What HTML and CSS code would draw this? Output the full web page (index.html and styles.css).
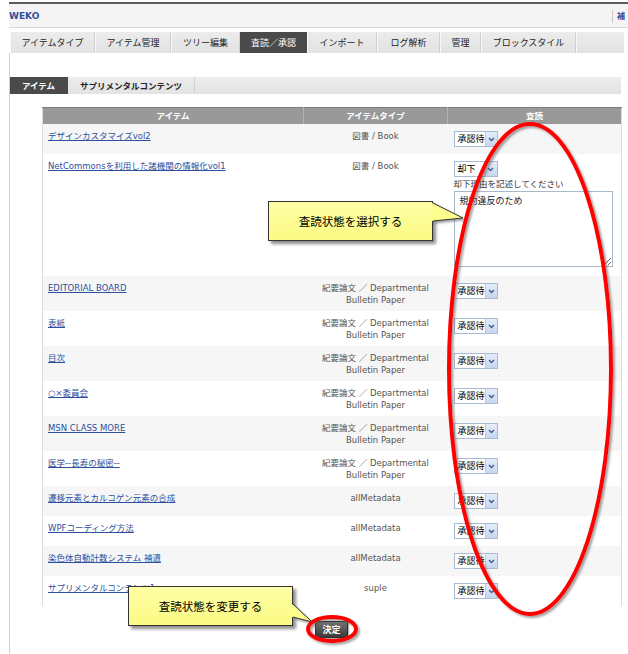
FILE: index.html
```html
<!DOCTYPE html>
<html lang="ja">
<head>
<meta charset="utf-8">
<title>WEKO 査読／承認</title>
<link rel="stylesheet" href="styles.css">
</head>
<body>
<div class="page">
  <header class="topbar">
    <span class="logo">WEKO</span>
    <span class="topright">補</span>
  </header>
  <nav class="tabs">
    <span class="tab t1">アイテムタイプ</span>
    <span class="tab t2">アイテム管理</span>
    <span class="tab t3">ツリー編集</span>
    <span class="tab t4 active">査読／承認</span>
    <span class="tab t5">インポート</span>
    <span class="tab t6">ログ解析</span>
    <span class="tab t7">管理</span>
    <span class="tab t8">ブロックスタイル</span>
    <span class="tab fill"></span>
  </nav>
  <main class="content">
    <div class="subtabs">
      <span class="subtab active">アイテム</span>
      <span class="subtab">サプリメンタルコンテンツ</span>
      <span class="subtab fill"></span>
    </div>
    <table class="grid">
      <colgroup><col class="c1"><col class="c2"><col class="c3"></colgroup>
      <thead>
        <tr><th>アイテム</th><th>アイテムタイプ</th><th>査読</th></tr>
      </thead>
      <tbody>
        <tr>
          <td><a href="#">デザインカスタマイズvol2</a></td>
          <td class="type">図書 / Book</td>
          <td><span class="sel"><span class="sel-v">承認待</span><span class="sel-a"><svg width="7" height="5" viewBox="0 0 7 5"><path d="M1 1l2.5 2.5L6 1" fill="none" stroke="#3d5a8f" stroke-width="1.3"/></svg></span></span></td>
        </tr>
        <tr class="reject">
          <td><a href="#">NetCommonsを利用した諸機関の情報化vol1</a></td>
          <td class="type">図書 / Book</td>
          <td>
            <span class="sel"><span class="sel-v">却下</span><span class="sel-a"><svg width="7" height="5" viewBox="0 0 7 5"><path d="M1 1l2.5 2.5L6 1" fill="none" stroke="#3d5a8f" stroke-width="1.3"/></svg></span></span>
            <div class="reason-label">却下理由を記述してください</div>
            <textarea class="reason" readonly>規約違反のため</textarea>
          </td>
        </tr>
        <tr>
          <td><a href="#">EDITORIAL BOARD</a></td>
          <td class="type">紀要論文 ／ Departmental<br>Bulletin Paper</td>
          <td><span class="sel"><span class="sel-v">承認待</span><span class="sel-a"><svg width="7" height="5" viewBox="0 0 7 5"><path d="M1 1l2.5 2.5L6 1" fill="none" stroke="#3d5a8f" stroke-width="1.3"/></svg></span></span></td>
        </tr>
        <tr>
          <td><a href="#">表紙</a></td>
          <td class="type">紀要論文 ／ Departmental<br>Bulletin Paper</td>
          <td><span class="sel"><span class="sel-v">承認待</span><span class="sel-a"><svg width="7" height="5" viewBox="0 0 7 5"><path d="M1 1l2.5 2.5L6 1" fill="none" stroke="#3d5a8f" stroke-width="1.3"/></svg></span></span></td>
        </tr>
        <tr>
          <td><a href="#">目次</a></td>
          <td class="type">紀要論文 ／ Departmental<br>Bulletin Paper</td>
          <td><span class="sel"><span class="sel-v">承認待</span><span class="sel-a"><svg width="7" height="5" viewBox="0 0 7 5"><path d="M1 1l2.5 2.5L6 1" fill="none" stroke="#3d5a8f" stroke-width="1.3"/></svg></span></span></td>
        </tr>
        <tr>
          <td><a href="#">○×委員会</a></td>
          <td class="type">紀要論文 ／ Departmental<br>Bulletin Paper</td>
          <td><span class="sel"><span class="sel-v">承認待</span><span class="sel-a"><svg width="7" height="5" viewBox="0 0 7 5"><path d="M1 1l2.5 2.5L6 1" fill="none" stroke="#3d5a8f" stroke-width="1.3"/></svg></span></span></td>
        </tr>
        <tr>
          <td><a href="#">MSN CLASS MORE</a></td>
          <td class="type">紀要論文 ／ Departmental<br>Bulletin Paper</td>
          <td><span class="sel"><span class="sel-v">承認待</span><span class="sel-a"><svg width="7" height="5" viewBox="0 0 7 5"><path d="M1 1l2.5 2.5L6 1" fill="none" stroke="#3d5a8f" stroke-width="1.3"/></svg></span></span></td>
        </tr>
        <tr>
          <td><a href="#">医学--長寿の秘密--</a></td>
          <td class="type">紀要論文 ／ Departmental<br>Bulletin Paper</td>
          <td><span class="sel"><span class="sel-v">承認待</span><span class="sel-a"><svg width="7" height="5" viewBox="0 0 7 5"><path d="M1 1l2.5 2.5L6 1" fill="none" stroke="#3d5a8f" stroke-width="1.3"/></svg></span></span></td>
        </tr>
        <tr>
          <td><a href="#">遷移元素とカルコゲン元素の合成</a></td>
          <td class="type">allMetadata</td>
          <td><span class="sel"><span class="sel-v">承認待</span><span class="sel-a"><svg width="7" height="5" viewBox="0 0 7 5"><path d="M1 1l2.5 2.5L6 1" fill="none" stroke="#3d5a8f" stroke-width="1.3"/></svg></span></span></td>
        </tr>
        <tr>
          <td><a href="#">WPFコーディング方法</a></td>
          <td class="type">allMetadata</td>
          <td><span class="sel"><span class="sel-v">承認待</span><span class="sel-a"><svg width="7" height="5" viewBox="0 0 7 5"><path d="M1 1l2.5 2.5L6 1" fill="none" stroke="#3d5a8f" stroke-width="1.3"/></svg></span></span></td>
        </tr>
        <tr>
          <td><a href="#">染色体自動計数システム 補遺</a></td>
          <td class="type">allMetadata</td>
          <td><span class="sel"><span class="sel-v">承認待</span><span class="sel-a"><svg width="7" height="5" viewBox="0 0 7 5"><path d="M1 1l2.5 2.5L6 1" fill="none" stroke="#3d5a8f" stroke-width="1.3"/></svg></span></span></td>
        </tr>
        <tr class="last">
          <td><a href="#">サプリメンタルコンテンツ1</a></td>
          <td class="type">suple</td>
          <td><span class="sel"><span class="sel-v">承認待</span><span class="sel-a"><svg width="7" height="5" viewBox="0 0 7 5"><path d="M1 1l2.5 2.5L6 1" fill="none" stroke="#3d5a8f" stroke-width="1.3"/></svg></span></span></td>
        </tr>
      </tbody>
    </table>
    <div class="actions"><button class="btn" type="button">決定</button></div>
  </main>
</div>

<div class="callout callout-select">査読状態を選択する</div>
<div class="callout callout-submit">査読状態を変更する</div>

<svg class="marks" width="628" height="654" viewBox="0 0 628 654">
  <defs>
    <filter id="sh" x="-20%" y="-20%" width="140%" height="140%">
      <feDropShadow dx="2" dy="2" stdDeviation="1.2" flood-color="#555" flood-opacity="0.55"/>
    </filter>
  </defs>
  <g filter="url(#sh)">
    <polygon points="432,203 463,218 432,221" fill="#fdfd8e"/>
    <polyline points="433,203 463,218 433,221" fill="none" stroke="#333" stroke-width="1"/>
    <polygon points="292,604 312,622 292,617" fill="#fdfd8e"/>
    <polyline points="293,604 312,622 293,617" fill="none" stroke="#333" stroke-width="1"/>
  </g>
  <g filter="url(#sh)" fill="none" stroke="#ff0000" stroke-width="4">
    <ellipse cx="530" cy="369" rx="81" ry="245"/>
    <ellipse cx="332" cy="629" rx="24" ry="12"/>
  </g>
</svg>
</body>
</html>
```
FILE: styles.css
```css
html, body {
  margin: 0;
  padding: 0;
  background: #fff;
}
body {
  position: relative;
  width: 628px;
  height: 654px;
  overflow: hidden;
  font-family: "DejaVu Sans", "Noto Sans CJK JP", sans-serif;
  font-size: 8.5px;
  line-height: 12px;
  color: #333;
}
.page {
  margin-left: 9px;
  width: 640px;
  padding-top: 2px;
}

/* header */
.topbar {
  display: flex;
  align-items: center;
  height: 23px;
  border-top: 2px solid #5c5c5c;
  border-bottom: 1px solid #d9d9d9;
  background: #f4f4f4;
}
.logo {
  color: #2f4f9f;
  font-weight: bold;
  font-size: 9px;
}
.topright {
  margin-left: 603px;
  height: 13px;
  border-left: 1px solid #c9c9c9;
  padding-left: 4px;
  color: #2f4f9f;
  font-family: "Noto Sans CJK JP", sans-serif;
  font-weight: bold;
  font-size: 8px;
  white-space: nowrap;
  position: absolute;
  left: 9px;
  top: 10px;
}

/* main tabs */
.tabs {
  display: flex;
  margin: 4px 0 0 1px;
  width: 614px;
  height: 21px;
}
.tab {
  box-sizing: border-box;
  display: flex;
  align-items: center;
  justify-content: center;
  height: 21px;
  background: linear-gradient(#ececec, #e2e2e2);
  border-right: 1px solid #d0d0d0;
  border-left: 1px solid #f8f8f8;
  color: #222;
  font-size: 9px;
  white-space: nowrap;
}
.tab.active {
  background: #4a4a4a;
  color: #fff;
  border-color: #4a4a4a;
}
.t1 { width: 85px; }
.t2 { width: 76px; }
.t3 { width: 69px; }
.t4 { width: 67px; }
.t5 { width: 70px; }
.t6 { width: 63px; }
.t7 { width: 41px; }
.t8 { width: 95px; }
.tab.fill { flex: 1; border-right: 0; }

/* content */
.content {
  border-left: 1px solid #cfcfcf;
  padding: 24px 0 8px 0;
  width: 620px;
}
.subtabs {
  display: flex;
  width: 611px;
  height: 17px;
  margin-bottom: 13px;
}
.subtab {
  box-sizing: border-box;
  display: flex;
  align-items: center;
  justify-content: center;
  height: 17px;
  background: linear-gradient(#ececec, #e3e3e3);
  border-right: 1px solid #cfcfcf;
  color: #222;
  font-weight: bold;
  white-space: nowrap;
  width: 127px;
}
.subtab.active {
  width: 58px;
  background: #4a4a4a;
  color: #fff;
  border-color: #4a4a4a;
}
.subtab.fill { flex: 1; border-right: 0; }

/* table */
.grid {
  margin-left: 32px;
  width: 579px;
  table-layout: fixed;
  border-collapse: collapse;
  border-left: 1px solid #dcdcdc;
  border-right: 1px solid #dcdcdc;
}
.c1 { width: 261px; }
.c2 { width: 144px; }
.c3 { width: 174px; }
.grid th {
  height: 16px;
  padding: 0;
  background: #999;
  border-top: 1px solid #7d7d7d;
  border-right: 1px solid #b3b3b3;
  color: #fff;
  font-weight: bold;
  text-align: center;
  line-height: 15px;
}
.grid th:last-child { border-right: 0; }
.grid td {
  vertical-align: top;
  padding: 6px 5px 5px 5px;
}
.grid tbody tr:nth-child(odd) td { background: #f6f6f6; }
.grid tbody tr:nth-child(even) td { background: #fff; }
.grid a {
  color: #2c4f9e;
  text-decoration: underline;
}
.grid td.type {
  text-align: center;
  color: #555;
}
.grid td:last-child { padding-left: 6px; }

.sel {
  box-sizing: border-box;
  display: inline-flex;
  width: 44px;
  height: 16px;
  margin: 1px 0 2px 0;
  border: 1px solid #a8bad4;
  background: #fff;
  vertical-align: top;
  font-size: 9px;
}
.reject .sel { margin-bottom: 1px; }
.sel-v {
  flex: 1;
  padding-left: 3px;
  color: #000;
  line-height: 14px;
  white-space: nowrap;
}
.sel-a {
  width: 12px;
  display: flex;
  align-items: center;
  justify-content: center;
  background: linear-gradient(#e6edf9, #c6d6f0);
  border-left: 1px solid #bccbe3;
}
.reason-label {
  margin-top: 0;
  color: #333;
  line-height: 12px;
}
.reason {
  display: block;
  box-sizing: border-box;
  width: 159px;
  height: 76px;
  margin: 1px 0 4px 0;
  padding: 3px 5px;
  border: 1px solid #a9b9cc;
  font-family: "DejaVu Sans", "Noto Sans CJK JP", sans-serif;
  font-size: 9px;
  line-height: 12px;
  color: #222;
  resize: both;
}

.actions {
  width: 579px;
  display: flex;
  justify-content: center;
  margin: 15px 0 0 32px;
  height: 28px;
}
.btn {
  width: 33px;
  height: 17px;
  padding: 0;
  border: 1px solid #2e2e2e;
  background: linear-gradient(#727272, #3a3a3a);
  color: #fff;
  font-family: "Noto Sans CJK JP", sans-serif;
  font-size: 9px;
  font-weight: bold;
  line-height: 15px;
  box-shadow: 1px 1px 1px rgba(0,0,0,.3);
}

/* annotations */
.callout {
  position: absolute;
  box-sizing: border-box;
  width: 165px;
  height: 40px;
  display: flex;
  align-items: center;
  justify-content: center;
  background: linear-gradient(#ffffa6, #fafa84);
  border: 1px solid #333;
  box-shadow: 3px 3px 3px rgba(0,0,0,.45);
  font-family: "Noto Sans CJK JP", sans-serif;
  font-size: 11.5px;
  color: #000;
}
.callout-select { left: 268px; top: 201px; }
.callout-submit { left: 128px; top: 586px; }
.marks {
  position: absolute;
  left: 0;
  top: 0;
  pointer-events: none;
}
```
